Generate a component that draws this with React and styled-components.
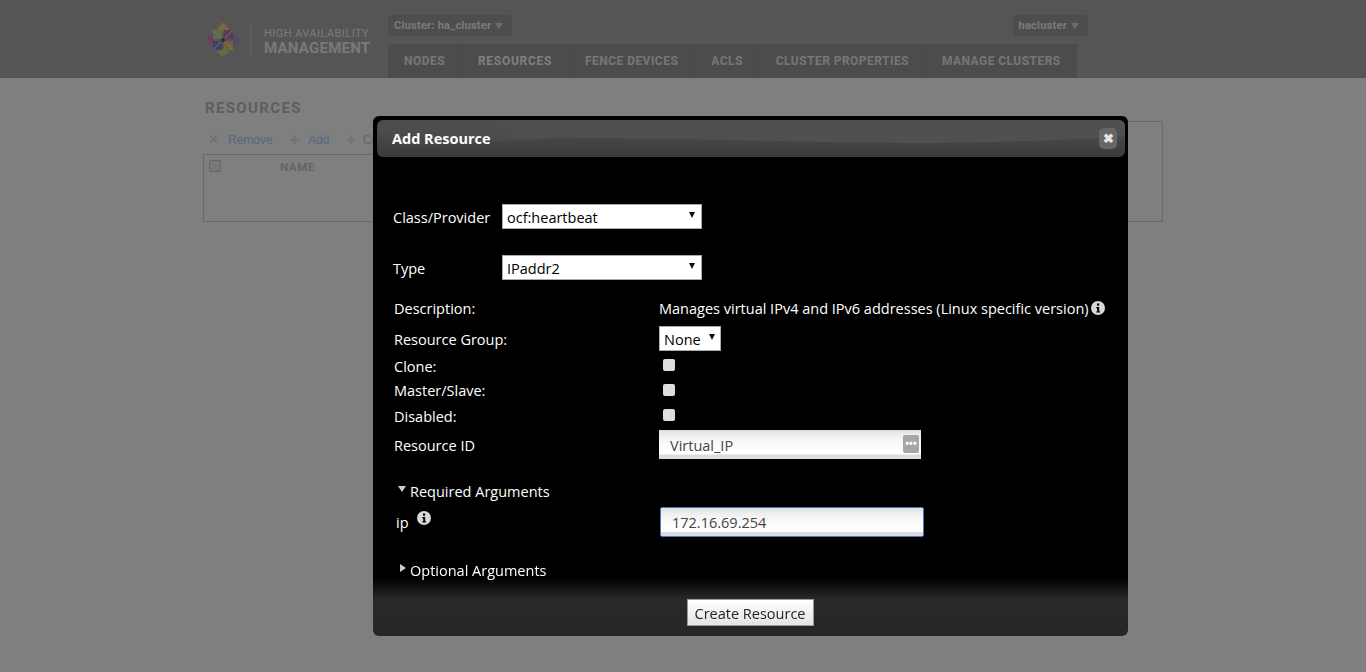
import React from "react";
import styled, { createGlobalStyle } from "styled-components";

const GlobalStyle = createGlobalStyle`
  html, body {
    margin: 0;
    padding: 0;
    height: 100%;
    background: #fff;
    overflow: hidden;
  }
  * {
    box-sizing: border-box;
  }
`;

const Page = styled.div`
  height: 672px;
  font-family: "Roboto", "Liberation Sans", sans-serif;
`;

const Header = styled.header`
  height: 78px;
  background-color: #adadad;
  background-image: radial-gradient(circle at 1px 1px, #a8a8a8 0.8px, transparent 1px);
  background-size: 3px 3px;
`;

const HeaderInner = styled.div`
  width: 960px;
  height: 78px;
  margin: 0 auto;
  padding-left: 2px;
  display: flex;
`;

const Brand = styled.div`
  width: 183px;
  display: flex;
  align-items: center;
  padding-top: 1px;
`;

const BrandDivider = styled.div`
  width: 1px;
  height: 34px;
  background: #c4c4c4;
  margin: 0 13px 0 9px;
`;

const BrandText = styled.div`
  color: #f2f2f2;
  padding-top: 3px;
  line-height: 15px;
  font-size: 11px;
  letter-spacing: 0.45px;
  white-space: nowrap;

  strong {
    display: block;
    font-size: 15px;
    font-weight: 700;
    letter-spacing: 0.25px;
  }
`;

const HeaderMain = styled.div`
  flex: 1;
  display: flex;
  flex-direction: column;
  padding-right: 75px;
`;

const HeaderTop = styled.div`
  height: 44px;
  padding-top: 15px;
  display: flex;
  justify-content: space-between;
`;

const Dropdown = styled.div`
  height: 21px;
  padding: 0 9px 0 6px;
  border-radius: 4px;
  background: #9a9a9a;
  color: #f4f4f4;
  font-size: 11px;
  font-weight: 700;
  display: flex;
  align-items: center;
  gap: 4px;
  letter-spacing: 0.25px;

  &::after {
    content: "";
    border-left: 4.5px solid transparent;
    border-right: 4.5px solid transparent;
    border-top: 6px solid #ddd;
  }
`;

const Tabs = styled.nav`
  display: flex;
  align-self: flex-start;
  height: 34px;
  background: #989898;
`;

const Tab = styled.a`
  display: flex;
  align-items: center;
  padding: 0 16px;
  color: ${(p) => (p.$active ? "#fff" : "#ececec")};
  font-size: 12px;
  font-weight: 700;
  letter-spacing: ${(p) => (p.$active ? "0.7px" : "0.46px")};
  border-right: 1px solid #909090;

  &:last-child {
    border-right: 0;
  }
`;

const Content = styled.main`
  width: 960px;
  margin: 0 auto;
  padding-top: 21px;
  display: flex;
  align-items: flex-end;
`;

const ListColumn = styled.section`
  width: 400px;
  flex-shrink: 0;
`;

const Title = styled.h1`
  margin: 0 0 4px 2px;
  height: 18px;
  color: #bcbcbc;
  font-size: 15px;
  line-height: 18px;
  font-weight: 700;
  letter-spacing: 1.35px;
`;

const Toolbar = styled.div`
  display: flex;
  align-items: center;
  height: 33px;
  padding: 4px 0 0 5px;
  font-family: "Liberation Sans", sans-serif;
  font-size: 12px;
`;

const ToolIcon = styled.span`
  color: #e4e4e4;
  font-size: ${(p) => p.$size || 13}px;
  font-weight: 700;
  margin-right: ${(p) => p.$gap || 9}px;
`;

const ToolLink = styled.a`
  color: #b0d0ff;
  margin-right: 17px;
`;

const ListTable = styled.div`
  height: 68px;
  border: 1px solid #d4d4d4;
  border-right: 0;
  padding: 5px 0 0 5px;
  display: flex;
  align-items: flex-start;
  gap: 59px;
  color: #c8c8c8;
  font-size: 11.5px;
  font-weight: 700;
  letter-spacing: 0.6px;
`;

const ListCheck = styled.span`
  width: 12px;
  height: 12px;
  border: 1px solid #c8c8c8;
  border-radius: 2px;
  background: #f0f0f0;
`;

const DetailPanel = styled.section`
  flex: 1;
  height: 101px;
  border: 1px solid #d4d4d4;
`;

const Overlay = styled.div`
  position: fixed;
  inset: 0;
  background: rgba(0, 0, 0, 0.5);
`;

const Modal = styled.div`
  position: fixed;
  left: 373px;
  top: 116px;
  width: 755px;
  height: 520px;
  padding: 4px 3px 0 4px;
  display: flex;
  flex-direction: column;
  border-radius: 6px;
  background: linear-gradient(#000 0, #000 462px, #2a2a2a 484px, #262626 100%);
  color: #fff;
  font-family: "Open Sans", "Noto Sans", sans-serif;
  font-size: 14.5px;
`;

const ModalBar = styled.div`
  position: relative;
  height: 37px;
  flex-shrink: 0;
  padding-left: 15px;
  display: flex;
  align-items: center;
  justify-content: space-between;
  border-radius: 6px;
  background: linear-gradient(#4c4c4c 30%, #3c3c3c 90%);
  overflow: hidden;
`;

const BarWave = styled.svg`
  position: absolute;
  left: 0;
  top: 0;
  width: 100%;
  height: 100%;
`;

const ModalTitle = styled.h2`
  position: relative;
  margin: 0;
  font-size: 14.5px;
  font-weight: 700;
  font-family: "Open Sans", sans-serif;
`;

const CloseButton = styled.button`
  position: relative;
  width: 18px;
  height: 21px;
  margin-right: 8px;
  padding: 0;
  border: 0;
  border-radius: 5px;
  background: #666;
  color: #e6e6e6;
  font-size: 13px;
  font-weight: 700;
  line-height: 21px;
`;

const ModalBody = styled.div`
  flex: 1;
  padding: 47px 0 0 16px;
`;

const TopRow = styled.div`
  display: flex;
  align-items: center;
  height: 25px;
  margin-bottom: ${(p) => p.$after}px;
`;

const TopLabel = styled.label`
  width: 109px;
  padding-top: 2px;
`;

const SelectWrap = styled.div`
  position: relative;
  width: ${(p) => p.$width}px;
  height: 25px;

  &::after {
    content: "";
    position: absolute;
    right: ${(p) => p.$caretRight}px;
    top: 8px;
    border-left: 3.5px solid transparent;
    border-right: 3.5px solid transparent;
    border-top: 6px solid #111;
    pointer-events: none;
  }
`;

const Select = styled.select`
  appearance: none;
  display: block;
  width: 100%;
  height: 100%;
  padding: 2px 0 0 4px;
  border: 1px solid #a9a9a9;
  border-radius: 0;
  background: #fff;
  color: #000;
  font: inherit;
`;

const FormRow = styled.div`
  display: flex;
  align-items: center;
  height: ${(p) => p.$height}px;
  margin-top: ${(p) => p.$before || 0}px;
  padding-left: 1px;
`;

const RowLabel = styled.label`
  width: 265px;
  flex-shrink: 0;
  padding-top: ${(p) => p.$drop || 0}px;
`;

const InfoIcon = styled.svg`
  width: 14px;
  height: 14px;
  flex-shrink: 0;
  margin: ${(p) => p.$margin};
`;

const Check = styled.input`
  appearance: none;
  display: block;
  width: 12px;
  height: 12px;
  margin: 0 0 ${(p) => p.$lift}px 4px;
  border-radius: 2px;
  background: #ddd;
`;

const TextField = styled.div`
  position: relative;
  width: ${(p) => p.$width}px;
  height: ${(p) => p.$height}px;
  padding: ${(p) => (p.$focus ? "1px" : "2px")} 0 0 11px;
  display: flex;
  align-items: center;
  color: #444;
  background: linear-gradient(#dedede 0, #f0f0f0 6px, #fbfbfb 50%, #fff 84%, #dcdcdc 85%);
  border: ${(p) => (p.$focus ? "1px solid #5078c8" : "0")};
  border-radius: ${(p) => (p.$focus ? "2px" : "0")};
`;

const KeyBadge = styled.span`
  position: absolute;
  right: 2px;
  top: 5px;
  width: 16px;
  height: 18px;
  border-radius: 2px;
  background: #a6a6a6;
  color: #fff;
  font-size: 10px;
  font-weight: 700;
  line-height: 17px;
  text-align: center;
  overflow: hidden;
`;

const SectionHead = styled.div`
  display: flex;
  align-items: center;
  gap: 4px;
  height: 20px;
  margin-top: ${(p) => p.$before}px;
  padding-left: 5px;
`;

const Caret = styled.span`
  width: 0;
  height: 0;
  margin-bottom: 5px;
  border-style: solid;
  border-color: transparent;
  ${(p) =>
    p.$open
      ? "border-width: 6px 4.5px 0; border-top-color: #ccc;"
      : "border-width: 4.5px 0 4.5px 6px; border-left-color: #ccc; margin-left: 2px;"}
`;

const IpLabel = styled.div`
  width: 266px;
  flex-shrink: 0;
  display: flex;
  align-items: center;
  padding-left: 2px;
`;

const ModalFooter = styled.div`
  height: 37px;
  flex-shrink: 0;
  display: flex;
  justify-content: center;
  padding-right: 2px;
`;

const CreateButton = styled.button`
  width: 127px;
  height: 27px;
  padding: 2px 0 0;
  border: 1px solid #999;
  background: linear-gradient(#fff, #e4e4e4);
  color: #222;
  font: inherit;
`;

const Info = ({ margin }) => (
  <InfoIcon viewBox="0 0 14 14" $margin={margin}>
    <circle cx="7" cy="7" r="7" fill="#d8d8d8" />
    <rect x="6" y="2.5" width="2.2" height="2.2" fill="#000" />
    <path d="M5.2 6h3v4.4h1v1.2H5.2v-1.2h1V7.2h-1z" fill="#000" />
  </InfoIcon>
);

const Logo = () => (
  <svg width="36" height="36" viewBox="0 0 36 36">
    {/* arrow tips */}
    <path d="M18 0.5l5.5 5.5v3h-11v-3z" fill="#f0d080" />
    <path d="M18 35.5l-5.5-5.5v-3h11v3z" fill="#bcdc80" />
    <path d="M35.5 18l-5.5 5.5h-3v-11h3z" fill="#a890d8" />
    <path d="M0.5 18l5.5-5.5h3v11h-3z" fill="#d080c8" />
    {/* four squares */}
    <rect x="8" y="8" width="9" height="9" fill="#bcdc80" />
    <rect x="19" y="8" width="9" height="9" fill="#c070b0" />
    <rect x="8" y="19" width="9" height="9" fill="#8080c8" />
    <rect x="19" y="19" width="9" height="9" fill="#f0c060" />
    <path d="M8 8l20 20M28 8L8 28" stroke="#e8e8e8" strokeWidth="1" />
    <circle cx="18" cy="18" r="2.2" fill="#666" />
  </svg>
);

const tabs = ["NODES", "RESOURCES", "FENCE DEVICES", "ACLS", "CLUSTER PROPERTIES", "MANAGE CLUSTERS"];

export default function App() {
  return (
    <>
      <GlobalStyle />
      <Page>
        <Header>
          <HeaderInner>
            <Brand>
              <Logo />
              <BrandDivider />
              <BrandText>
                HIGH AVAILABILITY
                <strong>MANAGEMENT</strong>
              </BrandText>
            </Brand>
            <HeaderMain>
              <HeaderTop>
                <Dropdown>Cluster: ha_cluster</Dropdown>
                <Dropdown>hacluster</Dropdown>
              </HeaderTop>
              <Tabs>
                {tabs.map((t) => (
                  <Tab key={t} $active={t === "RESOURCES"}>
                    {t}
                  </Tab>
                ))}
              </Tabs>
            </HeaderMain>
          </HeaderInner>
        </Header>
        <Content>
          <ListColumn>
            <Title>RESOURCES</Title>
            <Toolbar>
              <ToolIcon>✕</ToolIcon>
              <ToolLink>Remove</ToolLink>
              <ToolIcon $gap={9} $size={16}>+</ToolIcon>
              <ToolLink>Add</ToolLink>
              <ToolIcon $gap={7} $size={16}>+</ToolIcon>
              <ToolLink>Copy</ToolLink>
            </Toolbar>
            <ListTable>
              <ListCheck />
              NAME
            </ListTable>
          </ListColumn>
          <DetailPanel />
        </Content>
      </Page>
      <Overlay />
      <Modal>
        <ModalBar>
          <BarWave viewBox="0 0 748 37" preserveAspectRatio="none">
            <defs>
              <linearGradient id="barWaveFade" x1="0" x2="1" y1="0" y2="0">
                <stop offset="0" stopColor="#505050" stopOpacity="0" />
                <stop offset="0.3" stopColor="#505050" stopOpacity="1" />
              </linearGradient>
            </defs>
            <path
              d="M0 0H748V16C700 20 600 23 530 23C430 23 300 17 200 18C120 19 60 26 0 30Z"
              fill="url(#barWaveFade)"
            />
          </BarWave>
          <ModalTitle>Add Resource</ModalTitle>
          <CloseButton>✖</CloseButton>
        </ModalBar>
        <ModalBody>
          <TopRow $after={26}>
            <TopLabel>Class/Provider</TopLabel>
            <SelectWrap $width={200} $caretRight={7}>
              <Select defaultValue="ocf:heartbeat">
                <option>ocf:heartbeat</option>
              </Select>
            </SelectWrap>
          </TopRow>
          <TopRow $after={16}>
            <TopLabel>Type</TopLabel>
            <SelectWrap $width={200} $caretRight={7}>
              <Select defaultValue="IPaddr2">
                <option>IPaddr2</option>
              </Select>
            </SelectWrap>
          </TopRow>
          <FormRow $height={25}>
            <RowLabel>Description:</RowLabel>
            Manages virtual IPv4 and IPv6 addresses (Linux specific version)
            <Info margin="0 0 1px 2px" />
          </FormRow>
          <FormRow $height={35}>
            <RowLabel $drop={2}>Resource Group:</RowLabel>
            <SelectWrap $width={62} $caretRight={6}>
              <Select defaultValue="None">
                <option>None</option>
              </Select>
            </SelectWrap>
          </FormRow>
          <FormRow $height={20}>
            <RowLabel>Clone:</RowLabel>
            <Check type="checkbox" $lift={2} />
          </FormRow>
          <FormRow $height={28}>
            <RowLabel>Master/Slave:</RowLabel>
            <Check type="checkbox" $lift={0} />
          </FormRow>
          <FormRow $height={25}>
            <RowLabel>Disabled:</RowLabel>
            <Check type="checkbox" $lift={3} />
          </FormRow>
          <FormRow $height={31}>
            <RowLabel $drop={2}>Resource ID</RowLabel>
            <TextField $width={262} $height={29}>
              Virtual_IP
              <KeyBadge>•••</KeyBadge>
            </TextField>
          </FormRow>
          <SectionHead $before={21}>
            <Caret $open />
            Required Arguments
          </SectionHead>
          <FormRow $height={36} $before={3}>
            <IpLabel>
              ip
              <Info margin="0 0 8px 8px" />
            </IpLabel>
            <TextField $width={264} $height={30} $focus>
              172.16.69.254
            </TextField>
          </FormRow>
          <SectionHead $before={20}>
            <Caret />
            Optional Arguments
          </SectionHead>
        </ModalBody>
        <ModalFooter>
          <CreateButton>Create Resource</CreateButton>
        </ModalFooter>
      </Modal>
    </>
  );
}
